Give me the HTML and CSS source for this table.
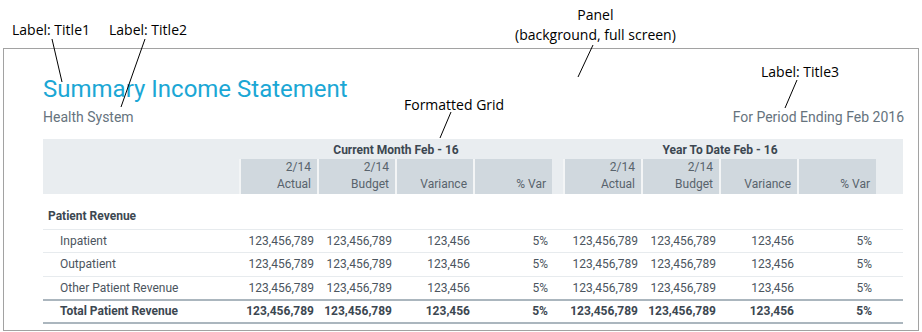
FILE: index.html
```html
<!DOCTYPE html>
<html lang="en">
<head>
    <meta charset="UTF-8">
    <meta name="viewport" content="width=device-width, initial-scale=1.0">
    <title>Summary Income Statement - Layout</title>
    <link rel="stylesheet" href="styles.css">
</head>
<body>
    <div class="page">
        <div class="panel">
            <div class="titles">
                <div class="title-left">
                    <h1 class="title1">Summary Income Statement</h1>
                    <p class="title2">Health System</p>
                </div>
                <p class="title3">For Period Ending Feb 2016</p>
            </div>

            <table class="grid">
                <colgroup>
                    <col class="col-label">
                    <col class="col-num"><col class="col-num"><col class="col-num"><col class="col-num">
                    <col class="col-gap">
                    <col class="col-num"><col class="col-num"><col class="col-num"><col class="col-num">
                    <col class="col-end">
                </colgroup>
                <thead>
                    <tr class="group-row">
                        <th></th>
                        <th colspan="4">Current Month Feb - 16</th>
                        <th></th>
                        <th colspan="4">Year To Date Feb - 16</th>
                        <th></th>
                    </tr>
                    <tr class="col-row">
                        <th class="blank"></th>
                        <th class="cell">2/14<br>Actual</th>
                        <th class="cell">2/14<br>Budget</th>
                        <th class="cell">Variance</th>
                        <th class="cell">% Var</th>
                        <th class="blank"></th>
                        <th class="cell">2/14<br>Actual</th>
                        <th class="cell">2/14<br>Budget</th>
                        <th class="cell">Variance</th>
                        <th class="cell">% Var</th>
                        <th class="blank"></th>
                    </tr>
                </thead>
                <tbody>
                    <tr class="section-row">
                        <td colspan="11">Patient Revenue</td>
                    </tr>
                    <tr class="data-row">
                        <td class="label">Inpatient</td>
                        <td>123,456,789</td><td>123,456,789</td><td>123,456</td><td>5%</td>
                        <td></td>
                        <td>123,456,789</td><td>123,456,789</td><td>123,456</td><td>5%</td>
                        <td></td>
                    </tr>
                    <tr class="data-row">
                        <td class="label">Outpatient</td>
                        <td>123,456,789</td><td>123,456,789</td><td>123,456</td><td>5%</td>
                        <td></td>
                        <td>123,456,789</td><td>123,456,789</td><td>123,456</td><td>5%</td>
                        <td></td>
                    </tr>
                    <tr class="data-row">
                        <td class="label">Other Patient Revenue</td>
                        <td>123,456,789</td><td>123,456,789</td><td>123,456</td><td>5%</td>
                        <td></td>
                        <td>123,456,789</td><td>123,456,789</td><td>123,456</td><td>5%</td>
                        <td></td>
                    </tr>
                    <tr class="data-row total-row">
                        <td class="label">Total Patient Revenue</td>
                        <td>123,456,789</td><td>123,456,789</td><td>123,456</td><td>5%</td>
                        <td></td>
                        <td>123,456,789</td><td>123,456,789</td><td>123,456</td><td>5%</td>
                        <td></td>
                    </tr>
                </tbody>
            </table>
        </div>

        <!-- callouts -->
        <span class="note note-title1">Label: Title1</span>
        <span class="note note-title2">Label: Title2</span>
        <span class="note note-panel">Panel<br>(background, full screen)</span>
        <span class="note note-grid">Formatted Grid</span>
        <span class="note note-title3">Label: Title3</span>
        <svg class="leaders" width="922" height="332" viewBox="0 0 922 332">
            <line x1="52" y1="39" x2="62" y2="82"/>
            <line x1="145" y1="39" x2="121" y2="107"/>
            <line x1="593" y1="45" x2="578" y2="77"/>
            <line x1="451" y1="112" x2="440" y2="138"/>
            <line x1="797" y1="80" x2="785" y2="108"/>
        </svg>
    </div>
</body>
</html>
```

FILE: styles.css
```css
* {
    margin: 0;
    padding: 0;
    box-sizing: border-box;
}

body {
    font-family: Roboto, 'Liberation Sans', Arial, sans-serif;
    background: #fff;
    color: #4b555e;
}

.page {
    position: relative;
    width: 922px;
    height: 332px;
    padding: 48px 0 0 3px;
}

.panel {
    width: 916px;
    height: 283px;
    border: 1px solid #a2a2a2;
    background: #fff;
    padding: 25px 14px 0 39px;
}

.titles {
    display: flex;
    justify-content: space-between;
    align-items: flex-end;
    margin-bottom: 13px;
}

.title1 {
    font-size: 24px;
    line-height: 30px;
    font-weight: 400;
    color: #1ba7d5;
}

.title2,
.title3 {
    font-size: 14px;
    line-height: 18px;
    color: #66737d;
    margin-top: 4px;
}

/* grid */
.grid {
    width: 860px;
    table-layout: fixed;
    border-collapse: collapse;
    font-size: 12px;
}

.col-label { width: 197px; }
.col-num { width: 78px; }
.col-gap { width: 12px; }
.col-end { width: 27px; }

.grid thead th {
    background: #e9edf0;
    font-weight: 400;
}

.grid .group-row th {
    height: 18px;
    font-weight: 700;
    color: #3c4751;
    text-align: center;
    line-height: 18px;
    padding-top: 2px;
}

.grid .col-row th {
    height: 35px;
    line-height: 17px;
    vertical-align: bottom;
}

.grid .col-row th.cell {
    background: #d0d8de;
    border-left: 2px solid #f3f5f6;
    text-align: right;
    padding: 0 6px 1px 0;
    color: #58636c;
}

.section-row td {
    height: 35px;
    vertical-align: bottom;
    padding: 0 0 6px 5px;
    font-weight: 700;
    color: #3c4751;
    border-bottom: 1px solid #e7ebee;
}

.data-row td {
    height: 23.5px;
    text-align: right;
    padding-right: 4px;
    border-bottom: 1px solid #e7ebee;
    white-space: nowrap;
}

.data-row td.label {
    text-align: left;
    padding-left: 17px;
}

.total-row td {
    font-weight: 700;
    color: #3c4751;
    border-top: 2px solid #abb6be;
    border-bottom: 2px solid #abb6be;
}

/* callouts */
.note {
    position: absolute;
    font-family: 'Open Sans', 'Noto Sans', sans-serif;
    font-size: 14px;
    line-height: 20px;
    color: #000;
    white-space: nowrap;
}

.note-title1 { left: 12px; top: 20px; }
.note-title2 { left: 109px; top: 20px; }
.note-panel { left: 515px; top: 5px; text-align: center; }
.note-grid { left: 404px; top: 95px; }
.note-title3 { left: 761px; top: 62px; }

.leaders {
    position: absolute;
    left: 0;
    top: 0;
    pointer-events: none;
}

.leaders line {
    stroke: #000;
    stroke-width: 1;
}
```
